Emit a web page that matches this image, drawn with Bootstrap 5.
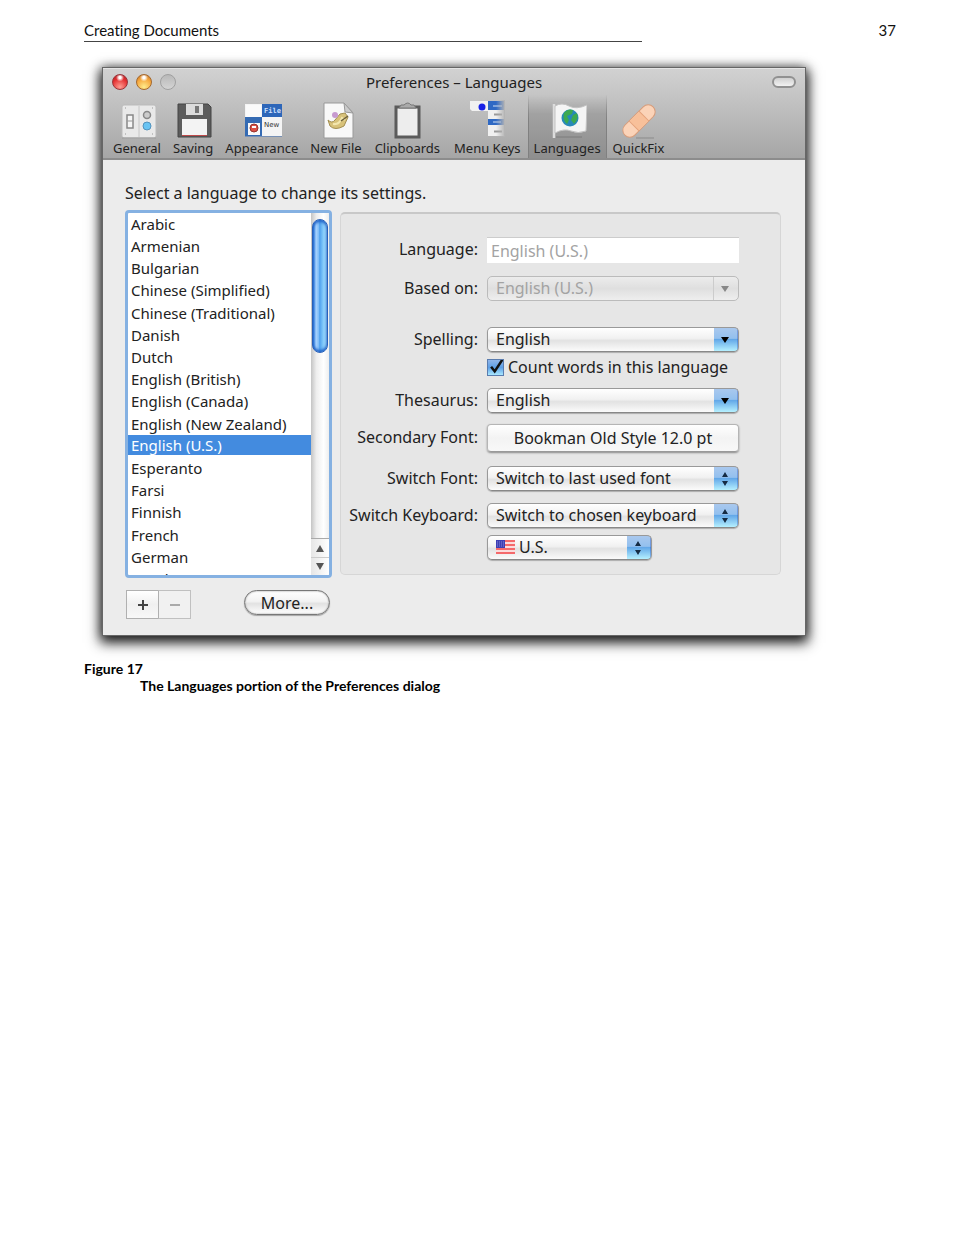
<!DOCTYPE html>
<html lang="en">
<head>
<meta charset="utf-8">
<meta name="viewport" content="width=device-width, initial-scale=1">
<title>Creating Documents</title>
<link rel="stylesheet" href="https://cdn.jsdelivr.net/npm/bootstrap@5.3.0/dist/css/bootstrap.min.css">
<style>
  body { background: #fff; color: #000; font-family: Lato, sans-serif; font-variant-ligatures: none; }
  .sheet { padding: 20px 58px 0 84px; }
  .running-head { font-size: 15px; line-height: 20px; color: #111; }
  .running-title { width: 68.7%; border-bottom: 1px solid #444; height: 22px; }

  .window { width: 86.7%; margin: 25px 0 0 18px; border: 1px solid #666; background: #ececec;
    box-shadow: 0 0 10px rgba(0,0,0,.4), 0 5px 12px 2px rgba(0,0,0,.85);
    font-family: "Noto Sans", sans-serif; font-size: 16px; line-height: 22px; color: #222; }
  .window button, .window select, .window input { font: inherit; color: inherit; }
  .chrome { background: linear-gradient(#d2d2d2, #a6a6a6); border-bottom: 2px solid #8c8c8c;
    box-shadow: inset 0 1px #e4e4e4; }
  .titlebar { height: 27px; padding: 0 9px; font-size: 15px; }
  .side { width: 90px; }
  .light { width: 16px; height: 16px; border-radius: 50%; border: 1px solid #8b5a55; padding: 0; }
  .light-red { background: radial-gradient(circle at 50% 18%, #fff 0 8%, transparent 30%), radial-gradient(circle at 50% 85%, #ff9d92, #e32f30 60%, #a51a20); border-color: #98353a; }
  .light-amber { background: radial-gradient(circle at 50% 18%, #fff 0 8%, transparent 30%), radial-gradient(circle at 50% 85%, #ffec8c, #f6a63c 60%, #b8651c); border-color: #a4682d; }
  .light-off { background: linear-gradient(#b9b9b9, #d4d4d4); border-color: #a0a0a0; }
  .pill { width: 24px; height: 12px; border-radius: 6px; border: 2px solid #919191; background: linear-gradient(#d0d0d0, #f2f2f2); padding: 0; }
  .tools { padding: 0 4px; height: 63px; }
  .tool { border: 0; background: none; padding: 3px 5px 0; border-left: 1px solid transparent; border-right: 1px solid transparent; }
  .tool.wide { padding: 3px 6px 0; }
  .window .tool { font-size: 13px; line-height: 17px; }
  .tool svg { display: block; margin: 0 auto; }
  .tool.active { background: linear-gradient(rgba(0,0,0,0), rgba(0,0,0,.14) 30%, rgba(0,0,0,.14)); 
    border-image: linear-gradient(rgba(80,80,80,0), #808080 40%, #808080) 1; }

  .content { padding: 22px 24px 16px 22px; }
  .hint { margin-bottom: 6px; }
  .picker { width: 207px; height: 368px; border: 3px solid #85b1e2; border-radius: 4px; background: #fff; overflow: hidden; }
  .names { overflow: hidden; font-size: 15px; }
  .names .list-group-item { border: 0; padding: 0 3px; height: 22px; line-height: 20px; text-align: left; background: none; flex: none; border-radius: 0; }
  .names .list-group-item:nth-child(5n) { height: 23px; }
  .names .list-group-item.active { background: #438bdf; color: #fff; height: 20px; margin: 0 0 2px; }
  .scroller { width: 18px; background: linear-gradient(90deg, #c4c4c4, #eee 30%, #fff 70%, #eee); padding-top: 6px; }
  .thumb { height: 134px; border-radius: 8px; border: 1px solid #2a60b8; margin: 0 1px;
    background: linear-gradient(90deg, #2f80e0, #a9d4ff 22%, #7fbdf8 40%, #4fa1ee 48%, #86cdfb 75%, #b7ebff);
    box-shadow: inset 0 2px 3px #2063c8, inset 0 -2px 3px #2063c8; }
  .arrows { background: #f4f4f4; border-top: 1px solid #aaa; }
  .arrows button { border: 0; padding: 0; height: 18px; background: linear-gradient(90deg, #e6e6e6, #fff); display: flex; align-items: center; justify-content: center; }
  .arrows button + button { border-top: 1px solid #ccc; }

  .settings { margin: 2px 0 0 8px; height: 363px; border: 1px solid #d6d6d6; border-top: 2px solid #c8c8c8; border-radius: 5px; background: #e6e6e6; padding: 23px 41px 0 0; }
  .settings label.name { width: 138px; padding-right: 1px; text-align: right; }
  .line { display: flex; gap: 8px; align-items: center; height: 25px; margin-bottom: 12px; }
  .line > :last-child { flex: 1; min-width: 0; }
  .line.first { height: 26px; margin-bottom: 13px; }
  .line.apart { margin-bottom: 26px; }
  .line.snug { margin-bottom: 4px; }
  .line.near { margin-bottom: 7px; }
  .line .name { line-height: 22px; margin-bottom: 2px; white-space: nowrap; }
  .window .field { height: 26px; border: 0; border-top: 1px solid #ccc; border-radius: 0; background: #fff; color: #a3a3a3; padding: 0 4px; }
  .window .combo { appearance: none; height: 25px; padding: 0 28px 0 8px; line-height: 21px; border: 1px solid #999; border-bottom-color: #888; border-radius: 5px; opacity: 1;
    box-shadow: 0 1px 1px rgba(0,0,0,.25);
    background: var(--mark) right 9px center / 8px 14px no-repeat,
      linear-gradient(90deg, transparent 70%, rgba(30,70,190,.55)) right / 4px 100% no-repeat,
      linear-gradient(#a9c8ee, #93c0ee 45%, #63a8e8 50%, #b5f0ff) right / 24px 100% no-repeat,
      linear-gradient(#fff, #f1f1f1 45%, #e2e2e2 55%, #fbfbfb); }
  .combo.down { --mark: url("data:image/svg+xml,%3Csvg xmlns='http://www.w3.org/2000/svg' viewBox='0 0 8 14'%3E%3Cpath d='M0 4h8L4 10z'/%3E%3C/svg%3E"); }
  .combo.updown { --mark: url("data:image/svg+xml,%3Csvg xmlns='http://www.w3.org/2000/svg' viewBox='0 0 8 14'%3E%3Cpath fill='%23162c44' d='M1 5h6L4 0zM1 9h6L4 14z'/%3E%3C/svg%3E"); }
  .window .combo:disabled { --mark: url("data:image/svg+xml,%3Csvg xmlns='http://www.w3.org/2000/svg' viewBox='0 0 8 14'%3E%3Cpath fill='%23888' d='M0 4h8L4 10z'/%3E%3C/svg%3E");
    color: #a3a3a3; border-color: #bbb; box-shadow: none;
    background: var(--mark) right 9px center / 8px 14px no-repeat,
      linear-gradient(#ccc, #ccc) right 24px top / 1px 100% no-repeat,
      linear-gradient(#ececec, #dfdfdf 50%, #eee); }
  .window .fontbtn { height: 28px; border: 1px solid #b5b5b5; border-bottom: 1px solid #999; border-radius: 4px; background: linear-gradient(#fff, #f3f3f3 50%, #f8f8f8); box-shadow: 0 1px 2px rgba(0,0,0,.4); padding: 0; line-height: 22px; }
  .indent { margin-left: 146px; }
  .count { margin-bottom: 10px; }
  .tick { appearance: none; width: 17px; height: 17px; margin: 0; border: 1px solid #5a7cae;
    background: url("data:image/svg+xml,%3Csvg xmlns='http://www.w3.org/2000/svg' viewBox='0 0 16 16'%3E%3Cpath fill='none' stroke='%23111' stroke-width='2.4' d='M3.500 7l3.500 4.500L14.500 0'/%3E%3C/svg%3E") center / 16px 16px no-repeat, linear-gradient(#8fb5ea, #5d9fe6 50%, #a9e8ff); }
  .flag { left: 9px; top: 5px; pointer-events: none; }
  .window .combo.flagged { padding-left: 31px; width: 165px; }

  .squares button { width: 33px; height: 29px; border: 1px solid #b0b0b0; background: linear-gradient(#fff, #f0f0f0 50%, #f8f8f8); padding: 0; display: flex; align-items: center; justify-content: center; }
  .squares button + button { margin-left: -1px; background: #f1f1f1; border-color: #c0c0c0 #c0c0c0 #c0c0c0 #b0b0b0; }
  .below { width: 205px; padding: 12px 0 0 1px; }
  .window .more { width: 86px; height: 25px; border: 1px solid #777; border-radius: 13px; line-height: 20px; padding: 0; background: linear-gradient(#fff, #f2f2f2 45%, #e2e2e2 55%, #fff); box-shadow: 0 1px 1px rgba(0,0,0,.3), inset 0 0 2px #888; }
  .caption { font-size: 14px; line-height: 17px; font-weight: 700; margin-top: 24px; }
  .caption span { display: block; padding-left: 56px; }
</style>
</head>
<body>
<main class="sheet">
  <header class="running-head d-flex justify-content-between">
    <div class="running-title">Creating Documents</div>
    <div>37</div>
  </header>

  <figure class="m-0">
    <section class="window" aria-label="Preferences – Languages">
      <div class="chrome">
        <div class="titlebar d-flex align-items-center justify-content-between">
          <div class="side d-flex gap-2">
            <button class="light light-red" type="button" aria-label="Close"></button>
            <button class="light light-amber" type="button" aria-label="Minimize"></button>
            <button class="light light-off" type="button" aria-label="Zoom" disabled></button>
          </div>
          <div>Preferences – Languages</div>
          <div class="side d-flex justify-content-end"><button class="pill" type="button" aria-label="Toggle toolbar"></button></div>
        </div>
        <nav class="tools d-flex" aria-label="Preference sections">
          <button class="tool" type="button">
            <svg width="40" height="40" viewBox="0 0 40 40"><rect x="5" y="5" width="34" height="33" rx="2" fill="#e9e9e9" stroke="#bbb"/><path d="M22 6v31" stroke="#c6c6c6"/><path d="M5 38h34" stroke="#999"/><rect x="10" y="15" width="6" height="13" fill="#f6f6f6" stroke="#888" stroke-width="1.500"/><path d="M10 21h6" stroke="#999"/><circle cx="30" cy="15" r="3.500" fill="#ccc" stroke="#888" stroke-width="1.500"/><circle cx="30" cy="26" r="4" fill="#69c4f3" stroke="#5393bd"/><path d="M8 8h1M35 8h1M8 34h1M35 34h1" stroke="#999"/></svg>
            General
          </button>
          <button class="tool" type="button">
            <svg width="40" height="40" viewBox="0 0 40 40"><path d="M5 4h30l3 3v30H5z" fill="#5c5c5c" stroke="#444"/><rect x="13" y="4" width="17" height="11" fill="#dcdcdc"/><rect x="22" y="6" width="4" height="7" fill="#777"/><path d="M9 19h25v17H9z" fill="#f3f3f3"/><path d="M9 35.500h25" stroke="#bd4a4a"/></svg>
            Saving
          </button>
          <button class="tool" type="button">
            <svg width="40" height="40" viewBox="0 0 40 40"><rect x="3" y="4" width="37" height="33" fill="#f4f4f4"/><path d="M20 4h20v13H20z" fill="#2d66b9"/><path d="M3 17h17v20H3z" fill="#356bb3"/><path d="M4 5h15v12H4zM6 23h12v12H6z" fill="#fafafa"/><circle cx="12" cy="28" r="4" fill="#dc5045" stroke="#96352f"/><path d="M10 27h4" stroke="#fff" stroke-width="2"/><text x="22" y="13" font-family="DejaVu Sans Mono" font-size="7" font-weight="700" fill="#cfe0ff">File</text><text x="22" y="27" font-family="DejaVu Sans" font-size="7" fill="#333">New</text><path d="M3 36.500h37" stroke="#7790b5"/></svg>
            Appearance
          </button>
          <button class="tool" type="button">
            <svg width="40" height="40" viewBox="0 0 40 40"><path d="M8 3h20l9 10v25H8z" fill="#f8f8f8" stroke="#999"/><path d="M28 3l1 9 8 1z" fill="#ccc" stroke="#999"/><path d="M12 20q4 4 7 0l5-6 5-1 3 4-4 9q-9 5-14 0z" fill="#d8c27a" stroke="#a38f52"/><path d="M17 24q6 1 9-6l3 2" fill="none" stroke="#f3e7af" stroke-width="2"/><circle cx="19" cy="15" r="3" fill="#c79ad0"/><path d="M25 21l7-5" stroke="#6b5f3b" stroke-width="1.500"/></svg>
            New File
          </button>
          <button class="tool wide" type="button">
            <svg width="40" height="40" viewBox="0 0 40 40"><rect x="9" y="7" width="23" height="30" fill="#ededed" stroke="#5b5b5b" stroke-width="3"/><path d="M12 8h17l-2-3h-3q-3-4-7 0h-3z" fill="#aaa" stroke="#777"/></svg>
            Clipboards
          </button>
          <button class="tool wide" type="button">
            <svg width="40" height="40" viewBox="0 0 40 40"><defs><linearGradient id="fade"><stop offset="0" stop-color="#b4b4b4" stop-opacity="0"/><stop offset="1" stop-color="#b4b4b4"/></linearGradient></defs><path d="M3 1h18v10H5l-2-2z" fill="#f1f1f1"/><circle cx="15" cy="7" r="3.500" fill="#1720e6"/><path d="M21 1h16v35H21z" fill="#f0f0f0"/><path d="M21 1h16v9H21zM21 19h16v6H21z" fill="#2f69c4"/><path d="M26 6h9M26 22h8" stroke="#80a5dc" stroke-width="2"/><path d="M27 14.500h8M27 31.500h8" stroke="#999" stroke-width="2"/><path d="M29 0h9v37h-9z" fill="url(#fade)"/></svg>
            Menu Keys
          </button>
          <button class="tool active" type="button" aria-current="page">
            <svg width="40" height="40" viewBox="0 0 40 40"><path d="M7 4v34" stroke="#ddd" stroke-width="2.500"/><path d="M9 37h26" stroke="#7d7d7d"/><path d="M8 6q7-4 14 0t18-1l-1 26q-8 3-15 0t-16 2z" fill="#f5f5f5" stroke="#c2c2c2"/><circle cx="23" cy="18" r="8.500" fill="#2789b9"/><path d="M17 13q4-5 9-3l-1 4-5 2 2 4-2 4q-5-4-3-11zM26 15l4-2q2 6-3 11l-3-4z" fill="#3da950"/></svg>
            Languages
          </button>
          <button class="tool" type="button">
            <svg width="40" height="40" viewBox="0 0 40 40"><path d="M18 38h18" stroke="#8b8b8b"/><g transform="rotate(-45 21 21)"><rect x="1" y="14" width="40" height="14" rx="7" fill="#fbd3b8" stroke="#d79c7a"/><rect x="14" y="14.500" width="14" height="13" fill="#f8c09a"/><path d="M14 14v14M28 14v14" stroke="#e4a27c"/></g></svg>
            QuickFix
          </button>
        </nav>
      </div>

      <div class="content">
        <div id="hint" class="hint">Select a language to change its settings.</div>
        <div class="d-flex align-items-start">
          <div class="picker d-flex flex-shrink-0">
            <div class="names list-group flex-grow-1" aria-labelledby="hint">
              <button type="button" class="list-group-item">Arabic</button>
              <button type="button" class="list-group-item">Armenian</button>
              <button type="button" class="list-group-item">Bulgarian</button>
              <button type="button" class="list-group-item">Chinese (Simplified)</button>
              <button type="button" class="list-group-item">Chinese (Traditional)</button>
              <button type="button" class="list-group-item">Danish</button>
              <button type="button" class="list-group-item">Dutch</button>
              <button type="button" class="list-group-item">English (British)</button>
              <button type="button" class="list-group-item">English (Canada)</button>
              <button type="button" class="list-group-item">English (New Zealand)</button>
              <button type="button" class="list-group-item active">English (U.S.)</button>
              <button type="button" class="list-group-item">Esperanto</button>
              <button type="button" class="list-group-item">Farsi</button>
              <button type="button" class="list-group-item">Finnish</button>
              <button type="button" class="list-group-item">French</button>
              <button type="button" class="list-group-item">German</button>
              <button type="button" class="list-group-item">Greek</button>
            </div>
            <div class="scroller d-flex flex-column justify-content-between flex-shrink-0">
              <div class="thumb"></div>
              <div class="arrows d-flex flex-column">
                <button type="button" aria-label="Scroll up"><svg width="8" height="7" viewBox="0 0 8 7"><path d="M0 7h8L4 0z" fill="#555"/></svg></button>
                <button type="button" aria-label="Scroll down"><svg width="8" height="7" viewBox="0 0 8 7"><path d="M0 0h8L4 7z" fill="#555"/></svg></button>
              </div>
            </div>
          </div>

          <form class="settings flex-grow-1">
            <div class="line first"><label class="name" for="lang">Language:</label><input id="lang" class="field" type="text" value="English (U.S.)" disabled></div>
            <div class="line apart"><label class="name" for="base">Based on:</label><select id="base" class="combo down" disabled><option>English (U.S.)</option></select></div>
            <div class="line snug"><label class="name" for="spell">Spelling:</label><select id="spell" class="combo down"><option>English</option></select></div>
            <div class="indent count d-flex align-items-center gap-1"><input id="count" class="tick" type="checkbox" checked><label for="count">Count words in this language</label></div>
            <div class="line"><label class="name" for="thes">Thesaurus:</label><select id="thes" class="combo down"><option>English</option></select></div>
            <div class="line"><label class="name" for="second">Secondary Font:</label><button id="second" class="fontbtn" type="button">Bookman Old Style 12.0 pt</button></div>
            <div class="line mt-3"><label class="name" for="sfont">Switch Font:</label><select id="sfont" class="combo updown"><option>Switch to last used font</option></select></div>
            <div class="line near"><label class="name" for="skey">Switch Keyboard:</label><select id="skey" class="combo updown"><option>Switch to chosen keyboard</option></select></div>
            <div class="indent position-relative">
              <select class="combo updown flagged" aria-label="Keyboard"><option>U.S.</option></select>
              <svg class="flag position-absolute" width="19" height="14" viewBox="0 0 19 14"><rect width="19" height="14" fill="#fbdcdc"/><path d="M0 1h19M0 5h19M0 9h19M0 13h19" stroke="#f4696b" stroke-width="2"/><rect width="9" height="8" fill="#3d3fb4"/><path d="M1 2h7M1 4h7M1 6h7" stroke="#8686d4" stroke-dasharray="1 1"/></svg>
            </div>
          </form>
        </div>
        <div class="below d-flex align-items-start justify-content-between">
          <div class="squares d-flex">
            <button type="button" aria-label="Add"><svg width="10" height="10" viewBox="0 0 10 10"><path d="M5 0v10M0 5h10" stroke="#444" stroke-width="2"/></svg></button>
            <button type="button" aria-label="Remove" disabled><svg width="10" height="10" viewBox="0 0 10 10"><path d="M0 5h10" stroke="#aaa" stroke-width="2"/></svg></button>
          </div>
          <button class="more" type="button">More...</button>
        </div>
      </div>
    </section>
    <figcaption class="caption">Figure 17<span>The Languages portion of the Preferences dialog</span></figcaption>
  </figure>
</main>
<script src="https://cdn.jsdelivr.net/npm/bootstrap@5.3.0/dist/js/bootstrap.bundle.min.js"></script>
</body>
</html>
